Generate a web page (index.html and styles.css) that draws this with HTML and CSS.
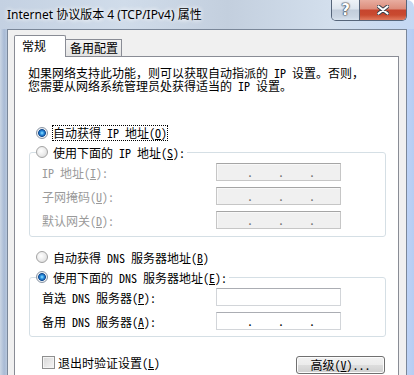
FILE: index.html
```html
<!DOCTYPE html>
<html lang="zh-CN">
<head>
<meta charset="UTF-8" />
<title>Internet 协议版本 4 (TCP/IPv4) 属性</title>
<link rel="stylesheet" href="styles.css">
</head>
<body>
<div class="window">
  <div class="titlebar">
    <span class="title">Internet 协议版本 4 (TCP/IPv4) 属性</span>
    <div class="caption-btns">
      <span class="cap help">?</span>
      <span class="cap close">
        <svg width="12" height="10" viewBox="0 0 12 10">
          <path d="M1.5 1.5 L10.5 8.5 M10.5 1.5 L1.5 8.5" stroke="#3a3f4a" stroke-width="4" stroke-linecap="round" fill="none"/>
          <path d="M1.5 1.5 L10.5 8.5 M10.5 1.5 L1.5 8.5" stroke="#fff" stroke-width="2.2" stroke-linecap="round" fill="none"/>
        </svg>
      </span>
    </div>
  </div>

  <div class="frame">
    <div class="edge edge-left"></div>
    <div class="client">
      <div class="tabs">
        <span class="tab active">常规</span>
        <span class="tab idle">备用配置</span>
      </div>

      <div class="panel">
        <p class="intro">如果网络支持此功能，则可以获取自动指派的 IP 设置。否则，<br>您需要从网络系统管理员处获得适当的 IP 设置。</p>

        <label class="opt opt-first"><span class="radio checked"></span><span class="focus">自动获得 IP 地址(<u>O</u>)</span></label>

        <fieldset class="group group-ip">
          <legend class="opt"><span class="radio"></span>使用下面的 IP 地址(<u>S</u>):</legend>
          <div class="row off">
            <span>IP 地址(<u>I</u>):</span>
            <span class="ip dim"><span class="dot">.</span><span class="dot">.</span><span class="dot">.</span></span>
          </div>
          <div class="row off">
            <span>子网掩码(<u>U</u>):</span>
            <span class="ip dim"><span class="dot">.</span><span class="dot">.</span><span class="dot">.</span></span>
          </div>
          <div class="row off">
            <span>默认网关(<u>D</u>):</span>
            <span class="ip dim"><span class="dot">.</span><span class="dot">.</span><span class="dot">.</span></span>
          </div>
        </fieldset>

        <label class="opt opt-dns"><span class="radio"></span>自动获得 DNS 服务器地址(<u>B</u>)</label>

        <fieldset class="group group-dns">
          <legend class="opt"><span class="radio checked"></span>使用下面的 DNS 服务器地址(<u>E</u>):</legend>
          <div class="row">
            <span>首选 DNS 服务器(<u>P</u>):</span>
            <span class="ip"></span>
          </div>
          <div class="row">
            <span>备用 DNS 服务器(<u>A</u>):</span>
            <span class="ip"><span class="dot">.</span><span class="dot">.</span><span class="dot">.</span></span>
          </div>
        </fieldset>

        <div class="footer">
          <label class="check"><span class="box"></span>退出时验证设置(<u>L</u>)</label>
          <button class="btn">高级(<u>V</u>)...</button>
        </div>
      </div>
    </div>
    <div class="edge edge-right"></div>
  </div>
</div>
</body>
</html>
```

FILE: styles.css
```css
* {
  box-sizing: border-box;
}
body {
  margin: 0;
  background: #fff;
  color: #000;
  font-family: "Noto Sans Mono CJK SC", "Noto Sans CJK SC", sans-serif;
  font-size: 12px;
}
u {
  text-decoration: underline;
  text-underline-offset: 1px;
}
.window {
  width: 414px;
  height: 375px;
  display: flex;
  flex-direction: column;
  overflow: hidden;
  border-top-right-radius: 7px;
  background: linear-gradient(to right, #c4d1e2 0%, #d0dcea 30%, #c3cfde 55%, #d3dfed 80%, #c4d8f4 100%);
}

/* title bar */
.titlebar {
  height: 29px;
  display: flex;
  justify-content: space-between;
  align-items: flex-start;
  padding: 0 7px 0 7px;
}
.title {
  font-family: "Noto Sans", "Noto Sans CJK SC", sans-serif;
  font-size: 12px;
  line-height: 16px;
  margin-top: 7px;
  text-shadow: 0 0 5px #fff, 0 0 5px #fff;
}
.caption-btns {
  display: flex;
  height: 21px;
  border: 1px solid #56657a;
  border-top: none;
  border-radius: 0 0 5px 5px;
  overflow: hidden;
}
.cap {
  height: 20px;
  display: flex;
  align-items: center;
  justify-content: center;
}
.help {
  width: 28px;
  border-right: 1px solid #56657a;
  background: linear-gradient(#eef2f7 0%, #dde5ee 45%, #c2cddb 50%, #cbd6e3 85%, #d9e3ee 100%);
  color: #fff;
  font: bold 15px "DejaVu Sans", sans-serif;
  text-shadow: 0 0 1px #2e3540, 0 0 1px #2e3540, 0 0 2px #2e3540;
}
.close {
  width: 46px;
  background: linear-gradient(#e8ada0 0%, #dc8c7b 45%, #c6452e 50%, #c94a30 75%, #e07a5e 100%);
}

/* frame + client area */
.frame {
  flex: 1;
  display: flex;
}
.edge {
  width: 7px;
}
.edge-left {
  background: linear-gradient(to right, #cbd6e4, #a9bbd5 60%, #b8c8dd);
}
.edge-right {
  background: linear-gradient(to right, #bcd2f6, #b6cdf2);
}
.client {
  flex: 1;
  display: flex;
  flex-direction: column;
  border: 1px solid #7a8799;
  border-bottom: none;
  background: #f0f0f0;
  padding: 5px 7px 0 6px;
}

/* tabs */
.tabs {
  display: flex;
  align-items: flex-end;
  height: 22px;
  margin-bottom: -1px;
  font-family: "Noto Sans CJK SC", sans-serif;
}
.tab {
  border: 1px solid #898c95;
  border-bottom: none;
}
.tab.active {
  position: relative;
  width: 52px;
  height: 22px;
  padding-left: 7px;
  line-height: 20px;
  background: #fff;
  border-radius: 2px 2px 0 0;
}
.tab.idle {
  width: 56px;
  height: 17px;
  margin-bottom: 1px;
  padding-left: 4px;
  line-height: 16px;
  border-left: none;
  background: linear-gradient(#f4f4f4, #e3e3e3);
}

/* tab page */
.panel {
  flex: 1;
  border: 1px solid #898c95;
  border-bottom: none;
  background: #fff;
}
.intro {
  margin: 9px 0 0 13px;
  line-height: 13px;
  white-space: nowrap;
}
.opt {
  display: flex;
  align-items: center;
  height: 16px;
  white-space: nowrap;
}
.opt-first {
  margin: 33px 0 0 21px;
}
.opt-dns {
  margin: 12px 0 0 21px;
}
.radio {
  width: 12px;
  height: 12px;
  margin-right: 5px;
  border-radius: 50%;
  border: 1px solid #a3a3a3;
  background: radial-gradient(circle at 40% 40%, #ffffff 0, #ececec 50%, #d4d4d4 100%);
}
.radio.checked {
  border-color: #8a95a3;
  background: radial-gradient(circle at 50% 50%, #9ee4ff 0, #3aa2ea 1.5px, #1560b0 3px, #184f92 3.6px, #e9eef3 4.2px, #f4f6f8 100%);
}
.focus {
  line-height: 14px;
  outline: 1px dotted #000;
}

/* group boxes */
.group {
  margin: 3px 12px 0 14px;
  padding: 3px 0 7px 0;
  min-width: 0;
  border: 1px solid #d5dfe5;
  border-radius: 3px;
}
.group-dns {
  margin-top: 4px;
  padding-bottom: 6px;
}
.group legend {
  margin-left: 6px;
  padding: 0 2px 0 0;
}
.row {
  display: grid;
  grid-template-columns: 174px 125px;
  align-items: center;
  height: 18px;
  margin-left: 12px;
  white-space: nowrap;
}
.row + .row {
  margin-top: 6px;
}
.row.off {
  color: #9a9a9a;
}
.ip {
  height: 18px;
  display: flex;
  gap: 25px;
  padding-left: 30px;
  line-height: 16px;
  background: #fff;
  border: 1px solid #d2d5d9;
  border-top-color: #abadb3;
  color: #000;
}
.ip.dim {
  background: #f0f0f0;
  border-color: #c6c6c6;
  border-top-color: #a5a5a5;
  box-shadow: inset 1px 1px 0 #f8f8f8;
  color: #6d6d6d;
}
.dot {
  width: 6px;
  text-align: center;
}

/* bottom row */
.footer {
  display: flex;
  justify-content: space-between;
  align-items: flex-start;
  margin: 19px 13px 0 27px;
}
.check {
  display: flex;
  align-items: center;
  height: 13px;
  white-space: nowrap;
}
.box {
  width: 13px;
  height: 13px;
  margin-right: 3px;
  border: 1px solid #8e8f8f;
  background: linear-gradient(135deg, #d6d6d6, #f6f6f6);
  box-shadow: inset 0 0 0 1px #f4f4f4;
}
.btn {
  width: 89px;
  height: 18px;
  padding: 0;
  border: 1px solid #707070;
  border-radius: 3px;
  background: linear-gradient(#f2f2f2 0%, #ebebeb 50%, #dddddd 51%, #cfcfcf 100%);
  box-shadow: inset 0 0 0 1px #fcfcfc;
  font: inherit;
  line-height: 16px;
  color: #000;
}
```
